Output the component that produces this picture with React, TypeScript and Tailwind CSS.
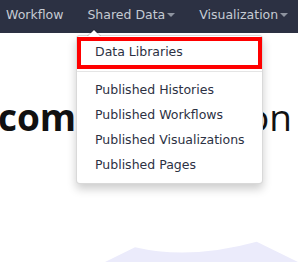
import React from "react";

// Top navigation with the "Shared Data" dropdown opened over the welcome page

const navItems = [
  { label: "Workflow", caret: false },
  { label: "Shared Data", caret: true },
  { label: "Visualization", caret: true },
];

const publishedItems = [
  "Published Histories",
  "Published Workflows",
  "Published Visualizations",
  "Published Pages",
];

function Caret() {
  return (
    <span className="ml-[2px] inline-block h-0 w-0 border-x-[4px] border-t-[4px] border-x-transparent border-t-[#8e94a0] align-middle" />
  );
}

export default function App() {
  return (
    <div
      className="relative h-[262px] w-[298px] overflow-hidden bg-white"
      style={{ fontFamily: '"DejaVu Sans", "Liberation Sans", sans-serif' }}
    >
      {/* Navbar */}
      <nav className="flex h-[33px] bg-[#2c3143]">
        <ul className="-ml-[6px] flex">
          {navItems.map((item) => (
            <li
              key={item.label}
              className="flex items-start whitespace-nowrap px-3 pt-[5px] text-[12.5px] leading-[20px] text-[#c6cbd3]"
            >
              {item.label}
              {item.caret && (
                <span className="flex h-[20px] items-center">
                  <Caret />
                </span>
              )}
            </li>
          ))}
        </ul>
      </nav>

      {/* Page heading, partly under the dropdown */}
      <h1
        className="mt-[66px] flex justify-between whitespace-nowrap text-[37px] leading-[36px] text-[#111]"
        style={{ fontFamily: '"Open Sans", sans-serif' }}
      >
        <span className="-ml-[71px] font-bold">Welcome</span>
        <span className="pr-[6px] font-normal">Collection</span>
      </h1>

      {/* Background wave */}
      <svg
        className="mt-[105px] block"
        width="298"
        height="22"
        viewBox="0 0 298 22"
      >
        <path d="M105 22 L135 7.3 Q190 20 256.7 1.7 L298 22 Z" fill="#ebebfb" />
      </svg>

      {/* Dropdown menu */}
      <div className="absolute left-[76px] top-[35px] w-[187px] rounded-[4px] border border-black/15 bg-white pt-[1px] pb-[5px] shadow-[0_5px_10px_rgba(0,0,0,0.2)]">
        {/* arrow */}
        <span className="absolute -top-[7px] left-[10px] h-0 w-0 border-x-[7px] border-b-[7px] border-x-transparent border-b-black/20" />
        <span className="absolute -top-[6px] left-[11px] h-0 w-0 border-x-[6px] border-b-[6px] border-x-transparent border-b-white" />

        <ul className="text-[12.5px] text-[#2c3143]">
          <li className="h-[32px] border-[4px] border-[#ff0000] pl-[14px] pt-[1px] leading-[20px] whitespace-nowrap">
            Data Libraries
          </li>
          <li className="mx-0 mt-[2px] mb-[4.5px] h-px bg-[#e5e5e5]" />
          {publishedItems.map((label) => (
            <li
              key={label}
              className="whitespace-nowrap pl-[18px] leading-[25.33px]"
            >
              {label}
            </li>
          ))}
        </ul>
      </div>
    </div>
  );
}
